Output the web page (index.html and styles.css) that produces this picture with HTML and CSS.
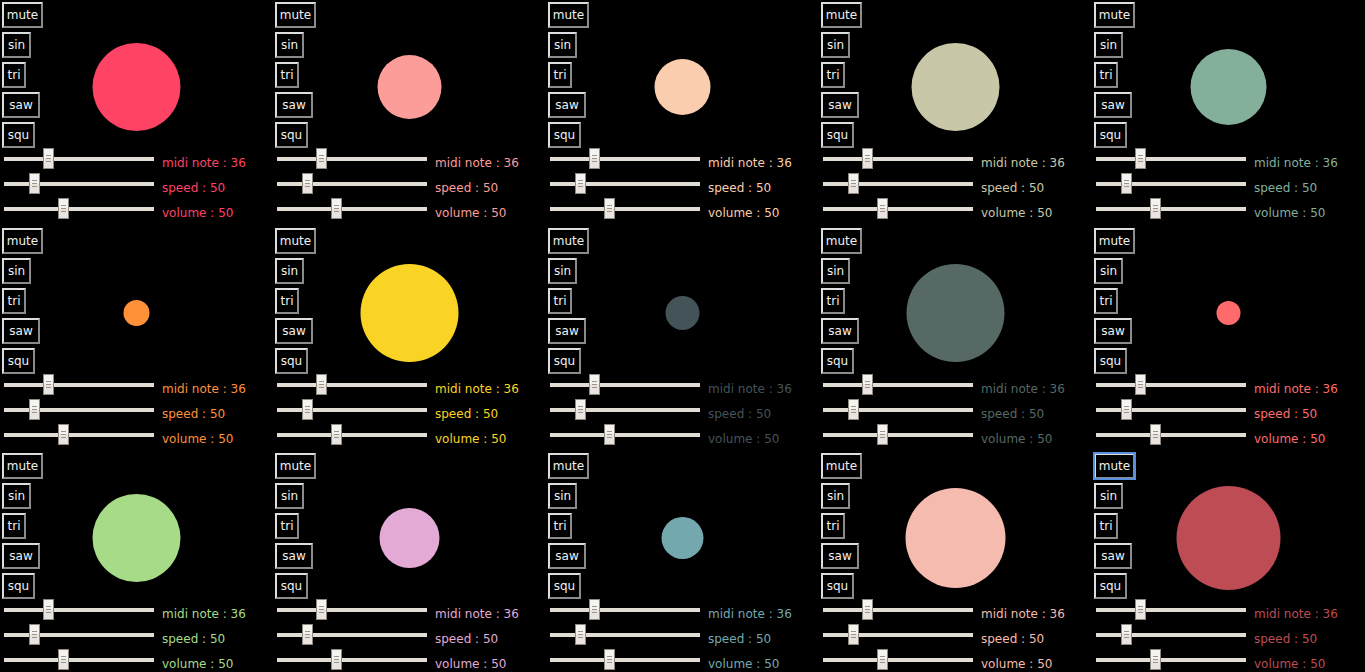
FILE: index.html
```html
<!DOCTYPE html>
<html lang="en">
<head>
<meta charset="utf-8">
<title>Oscillators</title>
<link rel="stylesheet" href="styles.css">
</head>
<body>
<main class="board" id="board"></main>
<template id="voice">
  <section class="voice">
    <svg class="orb" aria-hidden="true"><circle cx="50%" cy="50%"/></svg>
    <div class="waves">
      <button type="button" class="btn btn-mute">mute</button>
      <button type="button" class="btn btn-sin">sin</button>
      <button type="button" class="btn btn-tri">tri</button>
      <button type="button" class="btn btn-saw">saw</button>
      <button type="button" class="btn btn-squ">squ</button>
    </div>
    <div class="sliders">
      <label class="control"><input class="range" type="range" min="0" max="127" value="36"><span>midi note : 36</span></label>
      <label class="control"><input class="range" type="range" min="0" max="278" value="50"><span>speed : 50</span></label>
      <label class="control"><input class="range" type="range" min="0" max="128" value="50"><span>volume : 50</span></label>
    </div>
  </section>
</template>
<script src="main.js"></script>
</body>
</html>
```
FILE: styles.css
```css
* { box-sizing: border-box; }

body {
  margin: 0;
  background: #000;
  color: #fff;
  font: 12px/16px "DejaVu Sans", Verdana, sans-serif;
  overflow: hidden;
}

.board {
  display: grid;
  grid-template-columns: repeat(5, 1fr);
  grid-template-rows: 226px 225px 226px;
}

.voice {
  position: relative;
  padding: 2px;
}

.orb {
  position: absolute;
  top: 0;
  left: 0;
  width: 100%;
  height: 174px;
  fill: currentColor;
  pointer-events: none;
}

.waves {
  display: flex;
  flex-direction: column;
  align-items: flex-start;
  gap: 4px;
}

.btn {
  height: 26px;
  padding: 0;
  border: 2px solid;
  border-color: #dedede #8b8b8b #8b8b8b #dedede;
  background: #000;
  color: #f0f0f0;
  font: inherit;
}

.btn-mute { width: 41px; }
.btn-sin { width: 29px; }
.btn-tri { width: 24px; }
.btn-saw { width: 38px; }
.btn-squ { width: 33px; }

.btn:focus {
  outline: 2px solid #5a8ee0;
  outline-offset: -1px;
}

.sliders {
  display: grid;
  gap: 4px;
  padding-left: 2px;
}

.control {
  display: flex;
  align-items: center;
  gap: 8px;
  height: 21px;
}

.control span {
  padding-top: 8px;
}

.range {
  appearance: none;
  -webkit-appearance: none;
  width: 150px;
  height: 21px;
  margin: 0;
  background: transparent;
}

.range::-webkit-slider-runnable-track {
  height: 4px;
  background: #e1ddd4;
}

.range::-webkit-slider-thumb {
  -webkit-appearance: none;
  width: 11px;
  height: 21px;
  margin-top: -9px;
  border: 1px solid #8f887e;
  background:
    linear-gradient(#9a938b, #9a938b) 50% 6px / 5px 1px no-repeat,
    linear-gradient(#9a938b, #9a938b) 50% 9px / 5px 1px no-repeat,
    linear-gradient(#9a938b, #9a938b) 50% 12px / 5px 1px no-repeat,
    linear-gradient(#f5f3f0 50%, #e9e4df 50%);
}
```
FILE: main.js
```js
const voices = [
  ["#ff4365", 44], ["#fd9d9a", 32], ["#facdae", 28], ["#c8c8a9", 44], ["#83af9b", 38],
  ["#ff9138", 13], ["#fad424", 49], ["#435358", 17], ["#566965", 49], ["#ff6b6b", 12],
  ["#a8db87", 44], ["#e3aad6", 30], ["#74a8af", 21], ["#f5bbae", 50], ["#bd4c54", 52]
];
const board = document.getElementById("board");
const template = document.getElementById("voice");

for (const [color, radius] of voices) {
  const voice = template.content.cloneNode(true);
  voice.querySelector(".voice").style.color = color;
  voice.querySelector("circle").setAttribute("r", radius);
  board.append(voice);
}

board.lastElementChild.querySelector(".btn-mute").focus({ preventScroll: true });
```
